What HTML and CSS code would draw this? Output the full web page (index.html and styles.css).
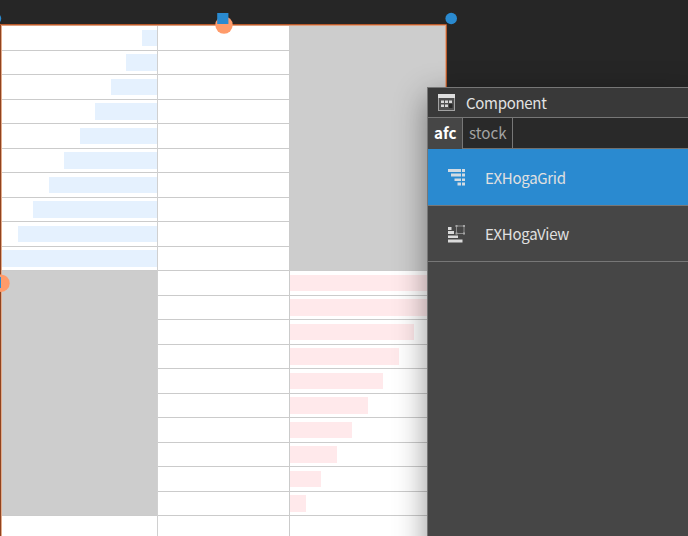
FILE: index.html
```
<!DOCTYPE html>
<html lang="en">
<head>
<meta charset="utf-8">
<title>Component</title>
<link rel="stylesheet" href="styles.css">
</head>
<body>
<main class="stage">
  <div class="hoga">
    <div class="col side">
      <div class="row"><i class="bar ask" style="width:15.5px"></i></div>
      <div class="row"><i class="bar ask" style="width:31px"></i></div>
      <div class="row"><i class="bar ask" style="width:46.5px"></i></div>
      <div class="row"><i class="bar ask" style="width:62px"></i></div>
      <div class="row"><i class="bar ask" style="width:77.5px"></i></div>
      <div class="row"><i class="bar ask" style="width:93px"></i></div>
      <div class="row"><i class="bar ask" style="width:108.5px"></i></div>
      <div class="row"><i class="bar ask" style="width:124px"></i></div>
      <div class="row"><i class="bar ask" style="width:139.5px"></i></div>
      <div class="row"><i class="bar ask" style="width:155px"></i></div>
      <div class="block"></div>
      <div class="row"></div>
    </div>
    <div class="col mid">
      <div class="row"></div><div class="row"></div><div class="row"></div><div class="row"></div><div class="row"></div>
      <div class="row"></div><div class="row"></div><div class="row"></div><div class="row"></div><div class="row"></div>
      <div class="row"></div><div class="row"></div><div class="row"></div><div class="row"></div><div class="row"></div>
      <div class="row"></div><div class="row"></div><div class="row"></div><div class="row"></div><div class="row"></div>
      <div class="row"></div>
    </div>
    <div class="col last">
      <div class="block"></div>
      <div class="row"><i class="bar bid" style="width:155px"></i></div>
      <div class="row"><i class="bar bid" style="width:139.5px"></i></div>
      <div class="row"><i class="bar bid" style="width:124px"></i></div>
      <div class="row"><i class="bar bid" style="width:108.5px"></i></div>
      <div class="row"><i class="bar bid" style="width:93px"></i></div>
      <div class="row"><i class="bar bid" style="width:77.5px"></i></div>
      <div class="row"><i class="bar bid" style="width:62px"></i></div>
      <div class="row"><i class="bar bid" style="width:46.5px"></i></div>
      <div class="row"><i class="bar bid" style="width:31px"></i></div>
      <div class="row"><i class="bar bid" style="width:15.5px"></i></div>
      <div class="row"></div>
    </div>
  </div>
  <svg class="handles" width="688" height="536" viewBox="0 0 688 536">
    <path d="M0 25.5H445.7V536" fill="none" stroke="#dda080" stroke-width="1.2"/>
    <path d="M0 24.5H446.5V536" fill="none" stroke="#b8592a" stroke-width="1"/>
    <path d="M.5 25V536" stroke="#90431f"/>
    <path d="M1.5 26V536" stroke="#e2ab8b"/>
    <circle cx="224" cy="25" r="8.7" fill="#ff9b6a"/>
    <rect x="217.2" y="13" width="11.2" height="11" fill="#2a8ad0"/>
    <circle cx="451.2" cy="18.5" r="5.8" fill="#2a8ad0"/>
    <circle cx="-4.6" cy="18.5" r="5.8" fill="#2a8ad0"/>
    <circle cx="1" cy="283.2" r="8.7" fill="#ff9b6a"/>
    <path d="M0 277h1v11h-1z" fill="#2a8ad0"/>
  </svg>
  <aside class="panel">
    <header class="title">
      <svg class="title-icon" width="17" height="17" viewBox="0 0 17 17">
        <rect x=".5" y=".5" width="16" height="16" fill="#505050" stroke="#a2a2a2"/>
        <path d="M0 0h17v4H0z" fill="#dedede"/>
        <path d="M3 6.500h3v2.500H3zM7 6.500h3v2.500H7zM11 6.500h3v2.500h-3zM3 10.500h3v2.500H3zM7 10.500h3v2.500H7z" fill="#d8d8d8"/>
        <path d="M11 10h3.500v4h-3.500z" fill="#292929"/>
      </svg>
      <span>Component</span>
    </header>
    <nav class="tabs">
      <span class="tab active">afc</span>
      <span class="tab">stock</span>
    </nav>
    <div class="item selected">
      <svg width="17" height="17" viewBox="0 0 17 17">
        <path d="M0 0h13v3H0zM14 0h3v3h-3zM3 4.500h10v3H3zM14 4.500h3v3h-3zM6.500 9.500h6.500v2.500H6.500zM14 9.500h3v2.500h-3zM9.500 13.500h3.500v3H9.500zM14 13.500h3v3h-3z" fill="#d3dbe2"/>
      </svg>
      <span>EXHogaGrid</span>
    </div>
    <div class="item">
      <svg width="17" height="18" viewBox="0 0 17 18">
        <path d="M0 2h3.500v3H0zM0 6h6v3H0zM0 10.500h10v2.500H0zM0 14.500h14.500v3H0z" fill="#dadada"/>
        <rect x="8.500" y="1" width="7.500" height="7.500" fill="none" stroke="#8d8d8d"/>
        <path d="M7.500 0h2v2h-2zM15 0h2v2h-2zM7.500 7.500h2v2h-2zM15 7.500h2v2h-2z" fill="#a5a5a5"/>
      </svg>
      <span>EXHogaView</span>
    </div>
  </aside>
</main>
</body>
</html>
```
FILE: styles.css
```
* {
  box-sizing: border-box;
}

body {
  margin: 0;
  background: #262626;
  font-family: "Noto Sans CJK KR", "Noto Sans", sans-serif;
  font-size: 15px;
  letter-spacing: -.3px;
}

.stage {
  position: relative;
  height: 536px;
  padding-top: 26px;
  overflow: hidden;
}

.hoga {
  display: grid;
  grid-template-columns: 158px 132px 156px;
  width: 446px;
  background: #fff;
}

.row {
  display: flex;
  align-items: center;
  height: 24.5px;
  border-bottom: 1px solid #cbcbcb;
}

.side {
  border-right: 1px solid #d0d0d0;
}

.mid {
  border-right: 1px solid #cbcbcb;
}

.side .row {
  justify-content: flex-end;
}

.bar {
  height: 16.5px;
}

.ask {
  background: #e5f1fe;
}

.bid {
  background: #ffe9eb;
}

.block {
  height: 245px;
  background: #cdcdcd;
  border-bottom: 1px solid #cbcbcb;
}

.handles {
  position: absolute;
  top: 0;
  left: 0;
}

.panel {
  position: absolute;
  top: 87px;
  left: 427px;
  width: 270px;
  height: 480px;
  background: #464646;
  border: 1px solid #777;
  box-shadow: 0 10px 30px rgba(0, 0, 0, .42);
}

.title {
  display: flex;
  align-items: center;
  gap: 11px;
  height: 30px;
  padding-left: 10px;
  background: #393939;
  border-bottom: 1px solid #777;
  color: #e2e2e2;
}

.tabs {
  display: flex;
  height: 31px;
  background: #292929;
  border-bottom: 1px solid #707070;
}

.tab {
  width: 50px;
  height: 30px;
  padding-left: 6px;
  border-right: 1px solid #777;
  color: #a2a2a2;
  font-size: 15.2px;
  line-height: 29px;
  letter-spacing: 0;
}

.tab.active {
  width: 35px;
  height: 31px;
  background: #464646;
  color: #fff;
  font-weight: bold;
}

.item {
  display: flex;
  align-items: center;
  gap: 20px;
  height: 56px;
  padding-left: 20px;
  border-bottom: 1px solid #777;
  color: #e0e0e0;
}

.item.selected {
  height: 57px;
  background: #2a8ad0;
}
```
